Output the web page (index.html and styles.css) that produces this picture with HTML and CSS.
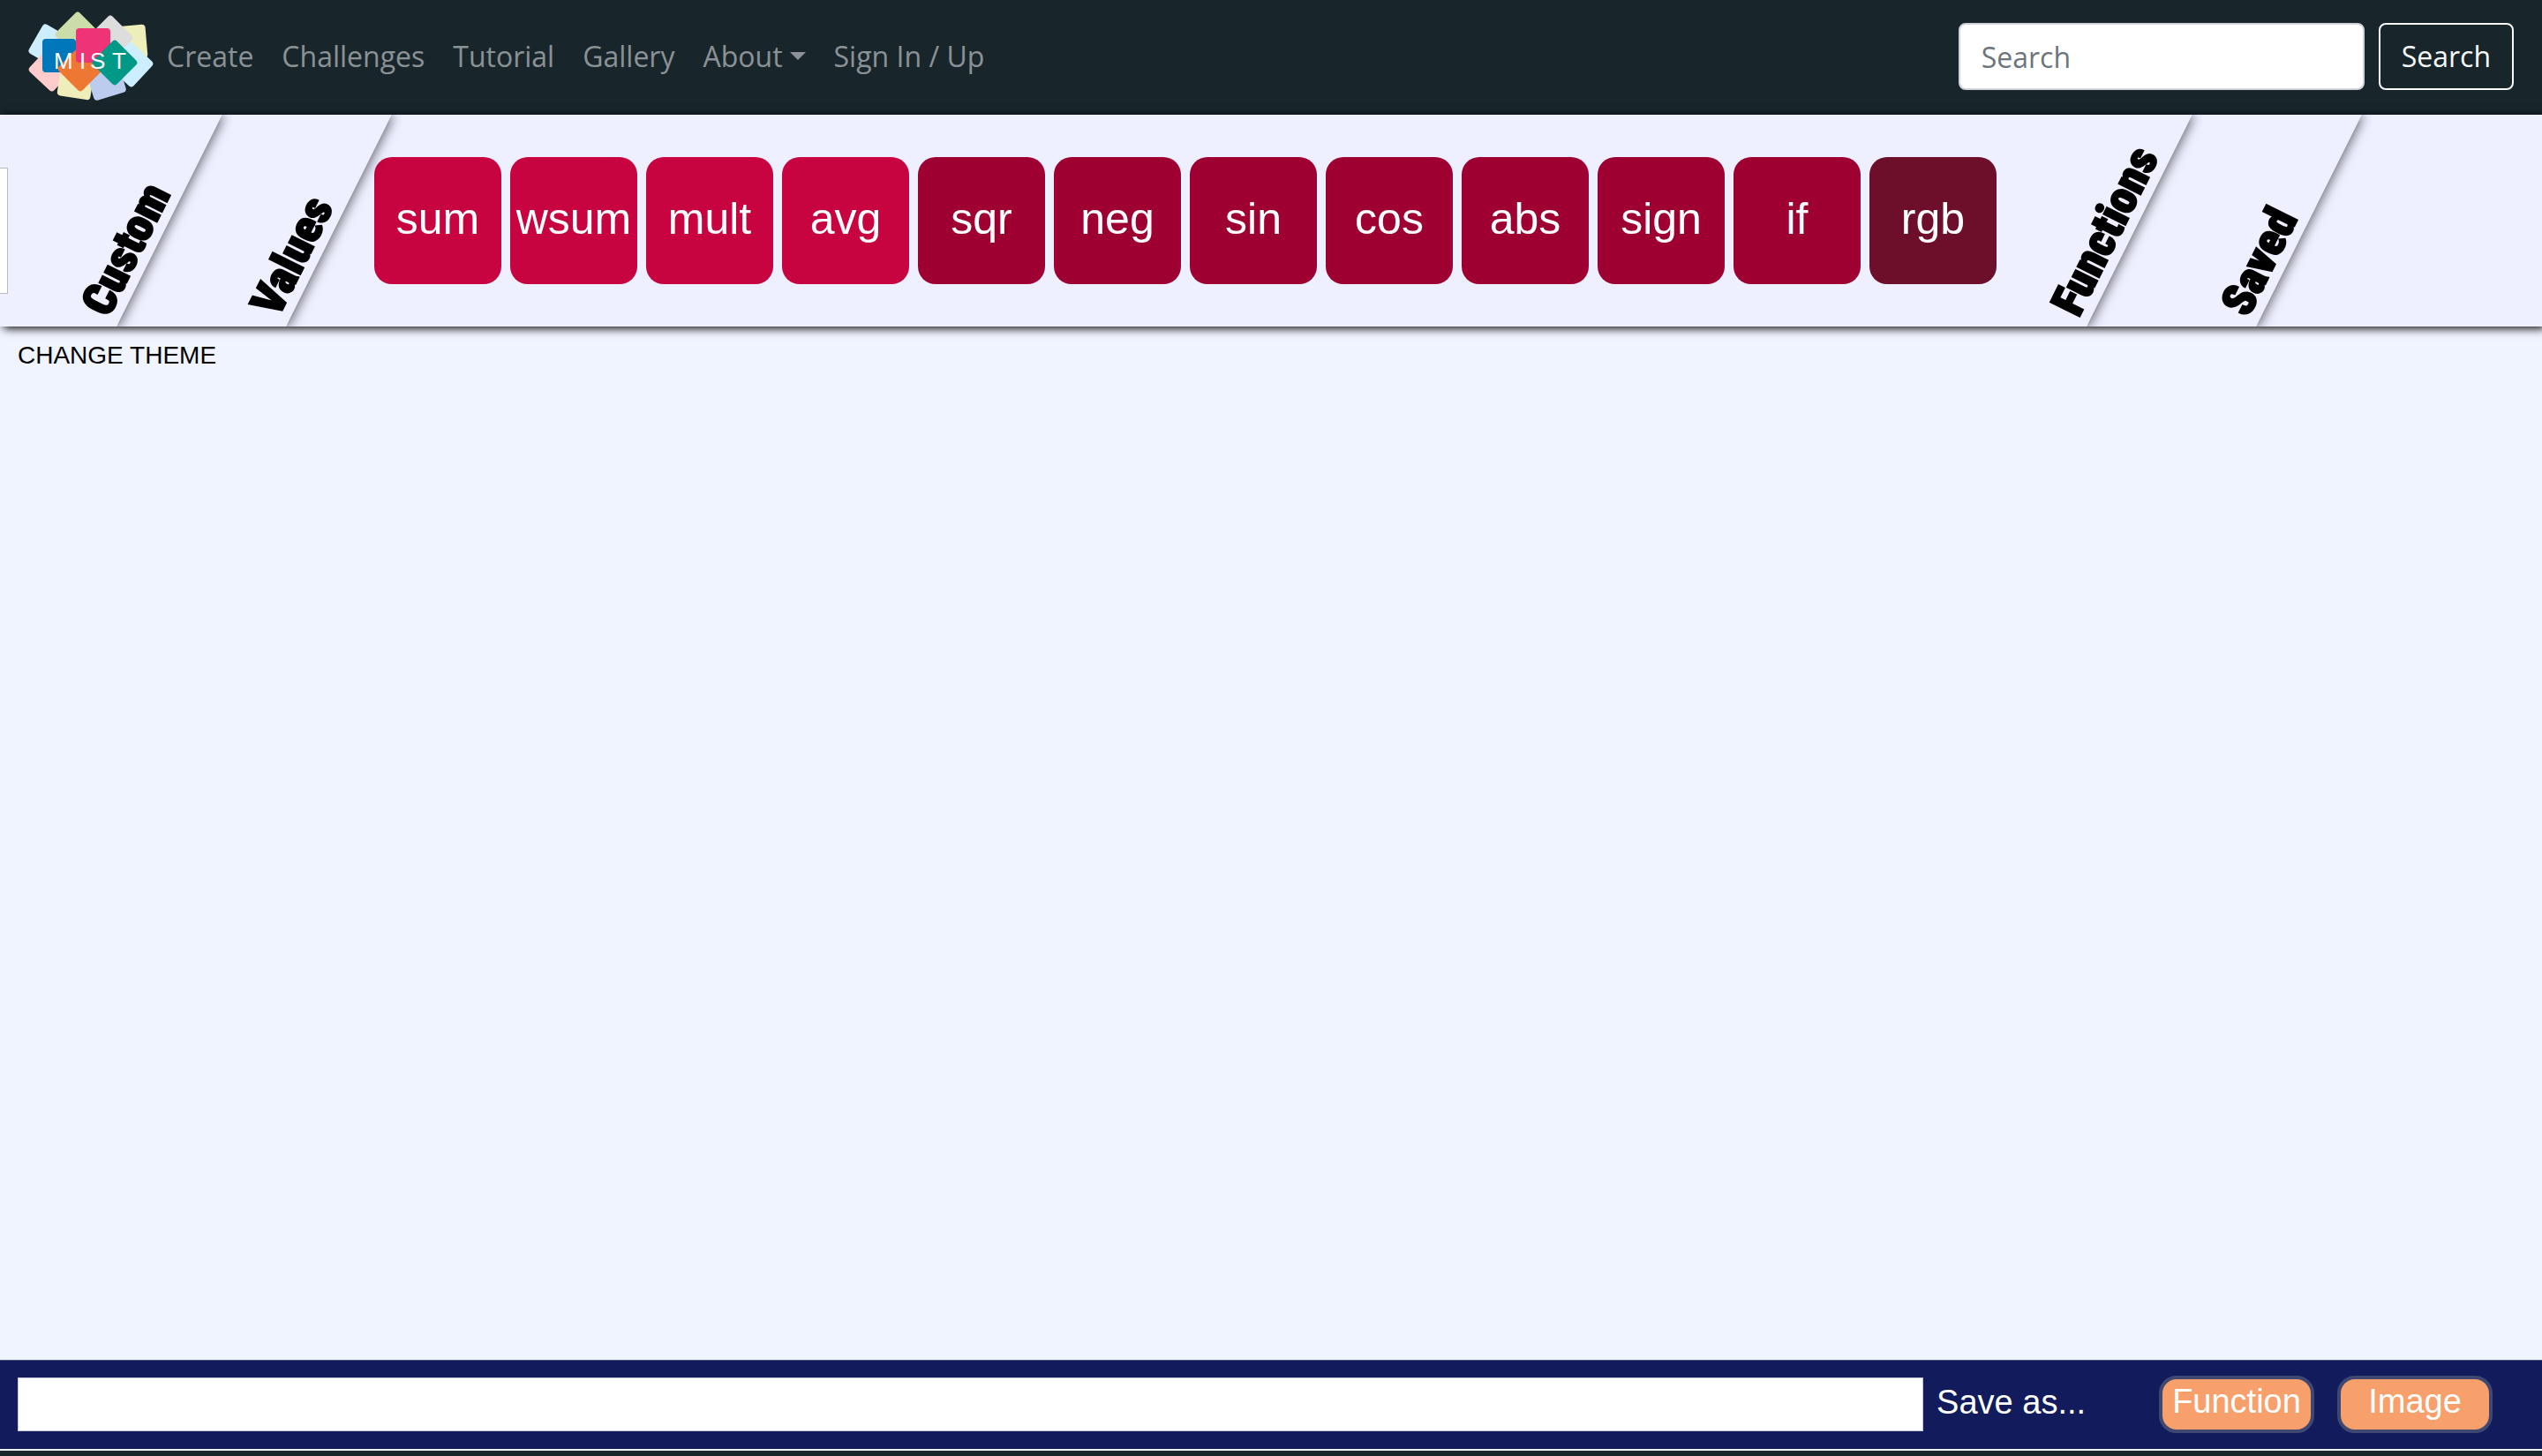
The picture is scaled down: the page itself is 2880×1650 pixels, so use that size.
FILE: index.html
```html
<!DOCTYPE html>
<html lang="en">
<head>
  <meta charset="utf-8">
  <meta name="viewport" content="width=device-width, initial-scale=1">
  <title>MIST</title>
  <link rel="stylesheet" href="styles.css">
</head>
<body>
  <header class="navbar">
    <a class="brand" href="#" aria-label="MIST home">
      <svg class="logo" viewBox="30 10 146 108" width="146" height="108" aria-hidden="true">
        <rect x="-19" y="-19" width="38" height="38" rx="4" fill="#eeeebb" transform="translate(147 48) rotate(-5)"/>
        <rect x="-19" y="-19" width="38" height="38" rx="4" fill="#cceeff" transform="translate(57 52) rotate(30)"/>
        <rect x="-19" y="-19" width="38" height="38" rx="4" fill="#cceeff" transform="translate(148 73) rotate(43)"/>
        <rect x="-19" y="-19" width="38" height="38" rx="4" fill="#ffcccc" transform="translate(58 78) rotate(43)"/>
        <rect x="-19" y="-19" width="38" height="38" rx="4" fill="#eeeebb" transform="translate(86 92) rotate(9)"/>
        <rect x="-19" y="-19" width="38" height="38" rx="4" fill="#bbccee" transform="translate(120 91) rotate(-17)"/>
        <rect x="-19" y="-19" width="38" height="38" rx="4" fill="#dddddd" transform="translate(125 43) rotate(45)"/>
        <rect x="-19" y="-19" width="38" height="38" rx="4" fill="#ccddaa" transform="translate(88 39) rotate(45)"/>
        <rect x="48" y="44" width="38" height="38" rx="4" fill="#0077bb"/>
        <rect x="-19" y="-19" width="38" height="38" rx="4" fill="#ee7733" transform="translate(91 78) rotate(45)"/>
        <rect x="86" y="32" width="39" height="39" rx="4" fill="#ee3377"/>
        <rect x="-19" y="-19" width="38" height="38" rx="4" fill="#009988" transform="translate(130 71) rotate(45)"/>
        <text class="logo-text" y="78"><tspan x="61">M</tspan><tspan x="90">I</tspan><tspan x="102">S</tspan><tspan x="127">T</tspan></text>
      </svg>
    </a>
    <nav class="nav">
      <a class="nav-link" href="#">Create</a>
      <a class="nav-link" href="#">Challenges</a>
      <a class="nav-link" href="#">Tutorial</a>
      <a class="nav-link" href="#">Gallery</a>
      <a class="nav-link dropdown" href="#">About</a>
      <a class="nav-link" href="#">Sign In / Up</a>
    </nav>
    <form class="search">
      <input class="search-input" type="search" placeholder="Search" aria-label="Search">
      <button class="search-button" type="button">Search</button>
    </form>
  </header>

  <section class="toolbar">
    <div class="panel panel-custom">
      <div class="preview"></div>
      <span class="tab">Custom</span>
    </div>
    <div class="panel panel-values">
      <span class="tab">Values</span>
    </div>
    <div class="panel panel-functions">
      <div class="tiles">
        <button class="tile" type="button">sum</button>
        <button class="tile" type="button">wsum</button>
        <button class="tile" type="button">mult</button>
        <button class="tile" type="button">avg</button>
        <button class="tile single" type="button">sqr</button>
        <button class="tile single" type="button">neg</button>
        <button class="tile single" type="button">sin</button>
        <button class="tile single" type="button">cos</button>
        <button class="tile single" type="button">abs</button>
        <button class="tile single" type="button">sign</button>
        <button class="tile single" type="button">if</button>
        <button class="tile color" type="button">rgb</button>
      </div>
      <span class="tab">Functions</span>
    </div>
    <div class="panel panel-saved">
      <span class="tab">Saved</span>
    </div>
  </section>

  <main class="workspace">
    <button class="theme-button" type="button">CHANGE THEME</button>
  </main>

  <form class="save-bar">
    <input class="expression" type="text" aria-label="Expression">
    <span class="save-label">Save as...</span>
    <div class="save-actions">
      <button class="save-button" type="button">Function</button>
      <button class="save-button" type="button">Image</button>
    </div>
  </form>
  <footer class="footer"></footer>
</body>
</html>
```
FILE: styles.css
```css
* {
  box-sizing: border-box;
}

body {
  display: flex;
  flex-direction: column;
  min-height: 100vh;
  margin: 0;
  background: #f0f4ff;
  font-family: "Liberation Sans", Arial, sans-serif;
}

button,
input {
  margin: 0;
  font-family: inherit;
}

button {
  cursor: pointer;
}

/* Navigation */
.navbar {
  display: flex;
  align-items: center;
  height: 130px;
  padding: 0 32px 2px 30px;
  background: #18252b;
  font-family: "Open Sans", sans-serif;
  font-size: 32px;
  line-height: 48px;
}

.brand,
.logo {
  display: block;
}

.logo-text {
  fill: #fff;
  font-family: "Liberation Sans", Arial, sans-serif;
  font-size: 26px;
}

.nav {
  display: flex;
}

.nav-link {
  padding: 16px;
  color: rgba(255, 255, 255, 0.5);
  text-decoration: none;
  white-space: nowrap;
}

.nav-link:first-child {
  padding-left: 13px;
}

.dropdown::after {
  content: "";
  display: inline-block;
  margin-left: 8px;
  vertical-align: 8px;
  border: 9px solid transparent;
  border-top-color: currentColor;
  border-bottom: 0;
}

.search {
  display: flex;
  gap: 16px;
  margin-left: auto;
}

.search-input,
.search-button {
  height: 76px;
  padding: 0 24px;
  border: 2px solid #ced4da;
  border-radius: 8px;
  font-size: 32px;
  line-height: 48px;
}

.search-input {
  width: 460px;
  background: #fff;
}

.search-input::placeholder {
  color: #6c757d;
  opacity: 1;
}

.search-button {
  border-color: #f8f9fa;
  background: transparent;
  color: #f8f9fa;
}

/* Toolbar */
.toolbar {
  display: flex;
  position: relative;
  z-index: 1;
  height: 240px;
  overflow: hidden;
  background: #eeefff;
  box-shadow: 4px 2px 10px #000;
}

.panel {
  position: relative;
  flex: 0 0 calc(100% / 15);
}

.panel-custom {
  z-index: 4;
}

.panel-values {
  z-index: 3;
}

.panel-functions {
  z-index: 2;
  flex: 0 0 calc(100% * 17 / 24);
}

.panel-saved {
  z-index: 1;
}

/* Slanted right edge of each panel */
.panel::before {
  content: "";
  position: absolute;
  z-index: -1;
  inset: 0;
  background: #eeefff;
  box-shadow: 2px 0 12px rgba(0, 0, 0, 0.6);
  transform: skewX(-26.5deg);
}

.panel-custom::before {
  left: -100px;
}

.tab {
  position: absolute;
  bottom: 0;
  left: calc(100% - 60px);
  padding-left: 4px;
  color: #000;
  font-family: Impact, "Roboto Condensed", Roboto, sans-serif;
  font-size: 52px;
  font-weight: 900;
  line-height: 58px;
  white-space: nowrap;
  -webkit-text-stroke: 2px #000;
  transform: rotate(-63.5deg);
  transform-origin: 0 100%;
}

.preview {
  width: 9px;
  height: 143px;
  margin-top: 60px;
  border: solid #bbb;
  border-width: 1px 1px 1px 0;
  background: #fff;
}

.tiles {
  display: flex;
  gap: 10px;
  padding: 48px 0 0 40px;
}

.tile {
  width: 144px;
  height: 144px;
  padding: 0 0 4px;
  border: 0;
  border-radius: 20px;
  background: #c70340;
  color: #fff;
  font-size: 50px;
}

.single {
  background: #9f0032;
}

.color {
  background: #6d0e2b;
}

/* Workspace */
.workspace {
  flex: 1;
  padding: 17px 20px;
}

.theme-button {
  padding: 0;
  border: 0;
  background: none;
  color: #000;
  font-size: 28px;
  line-height: 32px;
}

/* Save bar */
.save-bar {
  display: flex;
  align-items: center;
  height: 101px;
  padding: 0 56px 2px 20px;
  border-top: 1px solid #4a5180;
  background: #121c5c;
  color: #fff;
  font-size: 38px;
}

.expression {
  flex: 0 0 77%;
  height: 61px;
  padding: 0 12px;
  border: 1px solid #c4c7d7;
  background: #fff;
  font-size: 38px;
}

.save-label {
  margin-left: 15px;
  padding-bottom: 4px;
  white-space: nowrap;
}

.save-actions {
  display: flex;
  gap: 26px;
  margin-left: auto;
}

.save-button {
  width: 176px;
  height: 65px;
  padding: 0 0 6px;
  border: 4px solid #404872;
  border-radius: 20px;
  background: #f7a06c;
  color: #fff;
  font-size: 38px;
}

.footer {
  height: 6px;
  margin-top: 2px;
  background: #18252b;
}
```
